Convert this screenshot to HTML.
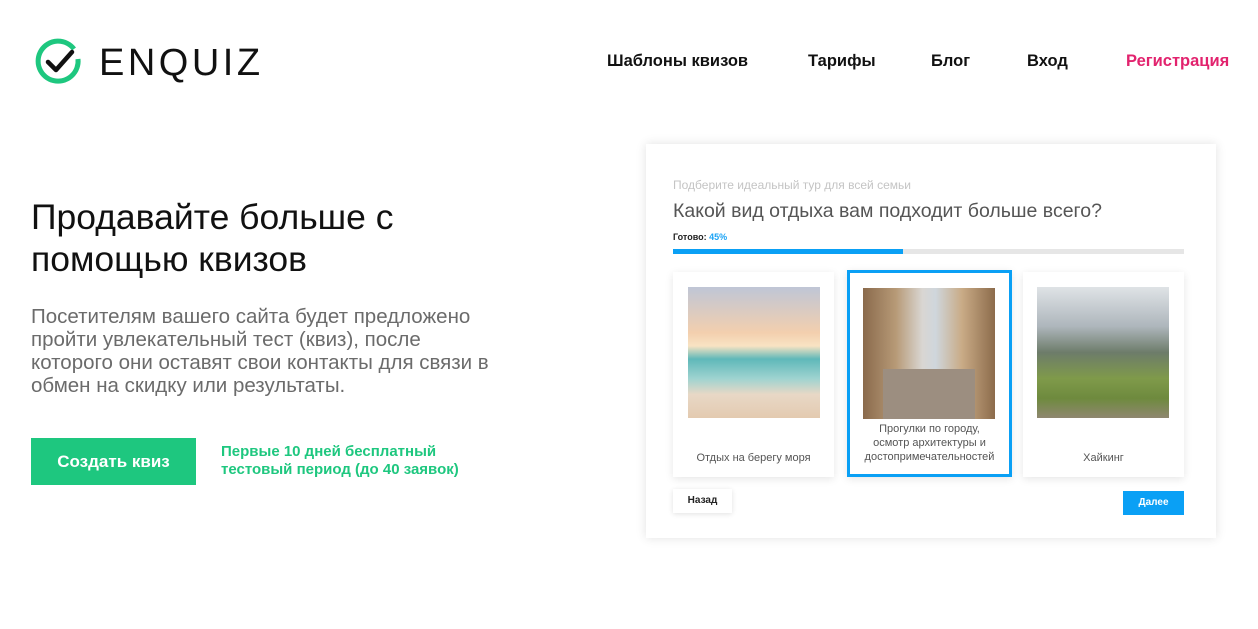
<!DOCTYPE html><html><head><meta charset="utf-8"><style>
body{margin:0;width:1258px;height:629px;background:#fff;font-family:"Liberation Sans",sans-serif;position:relative;overflow:hidden}
.a{position:absolute;white-space:nowrap}
.nav{top:52px;font-size:16.5px;font-weight:bold;color:#111}
.opt{position:absolute;top:272px;height:205px;background:#fff;box-shadow:0 2px 8px rgba(0,0,0,.1);box-sizing:border-box}
.img{position:absolute;top:15px;left:15px;width:132px;height:131px}
.cap{position:absolute;left:0;right:0;bottom:12px;text-align:center;font-size:11px;color:#555;line-height:14px}
</style></head><body>
<svg class="a" style="left:34px;top:37px" width="50" height="50" viewBox="0 0 50 50">
<path d="M40 12 A20 20 0 1 0 44 22" fill="none" stroke="#1ec77f" stroke-width="5"/>
<path d="M14 25 L22 33 L38 15" fill="none" stroke="#111" stroke-width="4.5" stroke-linecap="round" stroke-linejoin="round"/></svg>
<div class="a" style="left:99px;top:42px;font-size:38px;letter-spacing:3.5px;color:#111">ENQUIZ</div>
<div class="a nav" style="left:607px">Шаблоны квизов</div>
<div class="a nav" style="left:808px">Тарифы</div>
<div class="a nav" style="left:931px">Блог</div>
<div class="a nav" style="left:1027px">Вход</div>
<div class="a nav" style="left:1126px;color:#e2236e">Регистрация</div>
<div class="a" style="left:31px;top:196px;font-size:35.5px;line-height:42px;color:#111">Продавайте больше с<br>помощью квизов</div>
<div class="a" style="left:31px;top:305px;font-size:20.5px;line-height:23px;color:#6b6b6b">Посетителям вашего сайта будет предложено<br>пройти увлекательный тест (квиз), после<br>которого они оставят свои контакты для связи в<br>обмен на скидку или результаты.</div>
<div class="a" style="left:31px;top:438px;width:165px;height:47px;background:#1ec77f;color:#fff;font-size:17px;font-weight:bold;line-height:47px;text-align:center">Создать квиз</div>
<div class="a" style="left:221px;top:443px;font-size:15px;line-height:18px;font-weight:bold;color:#1ec77f">Первые 10 дней бесплатный<br>тестовый период (до 40 заявок)</div>
<div class="a" style="left:646px;top:144px;width:570px;height:394px;background:#fff;box-shadow:0 0 10px rgba(0,0,0,.12)">
<div class="a" style="left:27px;top:34px;font-size:12px;color:#c4c4c4">Подберите идеальный тур для всей семьи</div>
<div class="a" style="left:27px;top:56px;font-size:19.5px;color:#555">Какой вид отдыха вам подходит больше всего?</div>
<div class="a" style="left:27px;top:88px;font-size:9px;font-weight:bold;color:#222">Готово: <span style="color:#1aa3f5">45%</span></div>
<div class="a" style="left:27px;top:105px;width:511px;height:5px;background:#e6e6e6"><div style="width:230px;height:5px;background:#0aa0f5"></div></div>
</div>
<div class="opt" style="left:673px;width:161px"><div class="img" style="background:linear-gradient(180deg,#bfc6d6 0%,#f3cfae 35%,#f8e3c3 45%,#5fb8b9 55%,#9fd3d0 70%,#e8d8c6 82%,#e3cab0 100%)"></div><div class="cap">Отдых на берегу моря</div></div>
<div class="opt" style="left:847px;width:165px;height:207px;top:270px;border:3px solid #0aa0f5"><div class="img" style="left:13px;top:15px;background:linear-gradient(90deg,#8a6a4c 0%,#b79a77 25%,#d9d6d2 45%,#cfd6dc 55%,#c9ab86 75%,#8c6b4b 100%)"><div style="position:absolute;bottom:0;left:20px;right:20px;height:50px;background:#9c8e80"></div></div><div class="cap" style="bottom:10px">Прогулки по городу,<br>осмотр архитектуры и<br>достопримечательностей</div></div>
<div class="opt" style="left:1023px;width:161px"><div class="img" style="left:14px;background:linear-gradient(180deg,#dfe3e6 0%,#aeb6bc 30%,#6d7c6a 50%,#7f9a4a 70%,#6e8a3e 85%,#8f8770 100%)"></div><div class="cap">Хайкинг</div></div>
<div class="a" style="left:673px;top:489px;width:59px;height:24px;background:#fff;box-shadow:0 1px 5px rgba(0,0,0,.12);font-size:10px;font-weight:bold;line-height:24px;text-align:center;color:#222">Назад</div>
<div class="a" style="left:1123px;top:491px;width:61px;height:24px;background:#0aa0f5;font-size:10px;font-weight:bold;line-height:24px;text-align:center;color:#fff">Далее</div>
</body></html>
